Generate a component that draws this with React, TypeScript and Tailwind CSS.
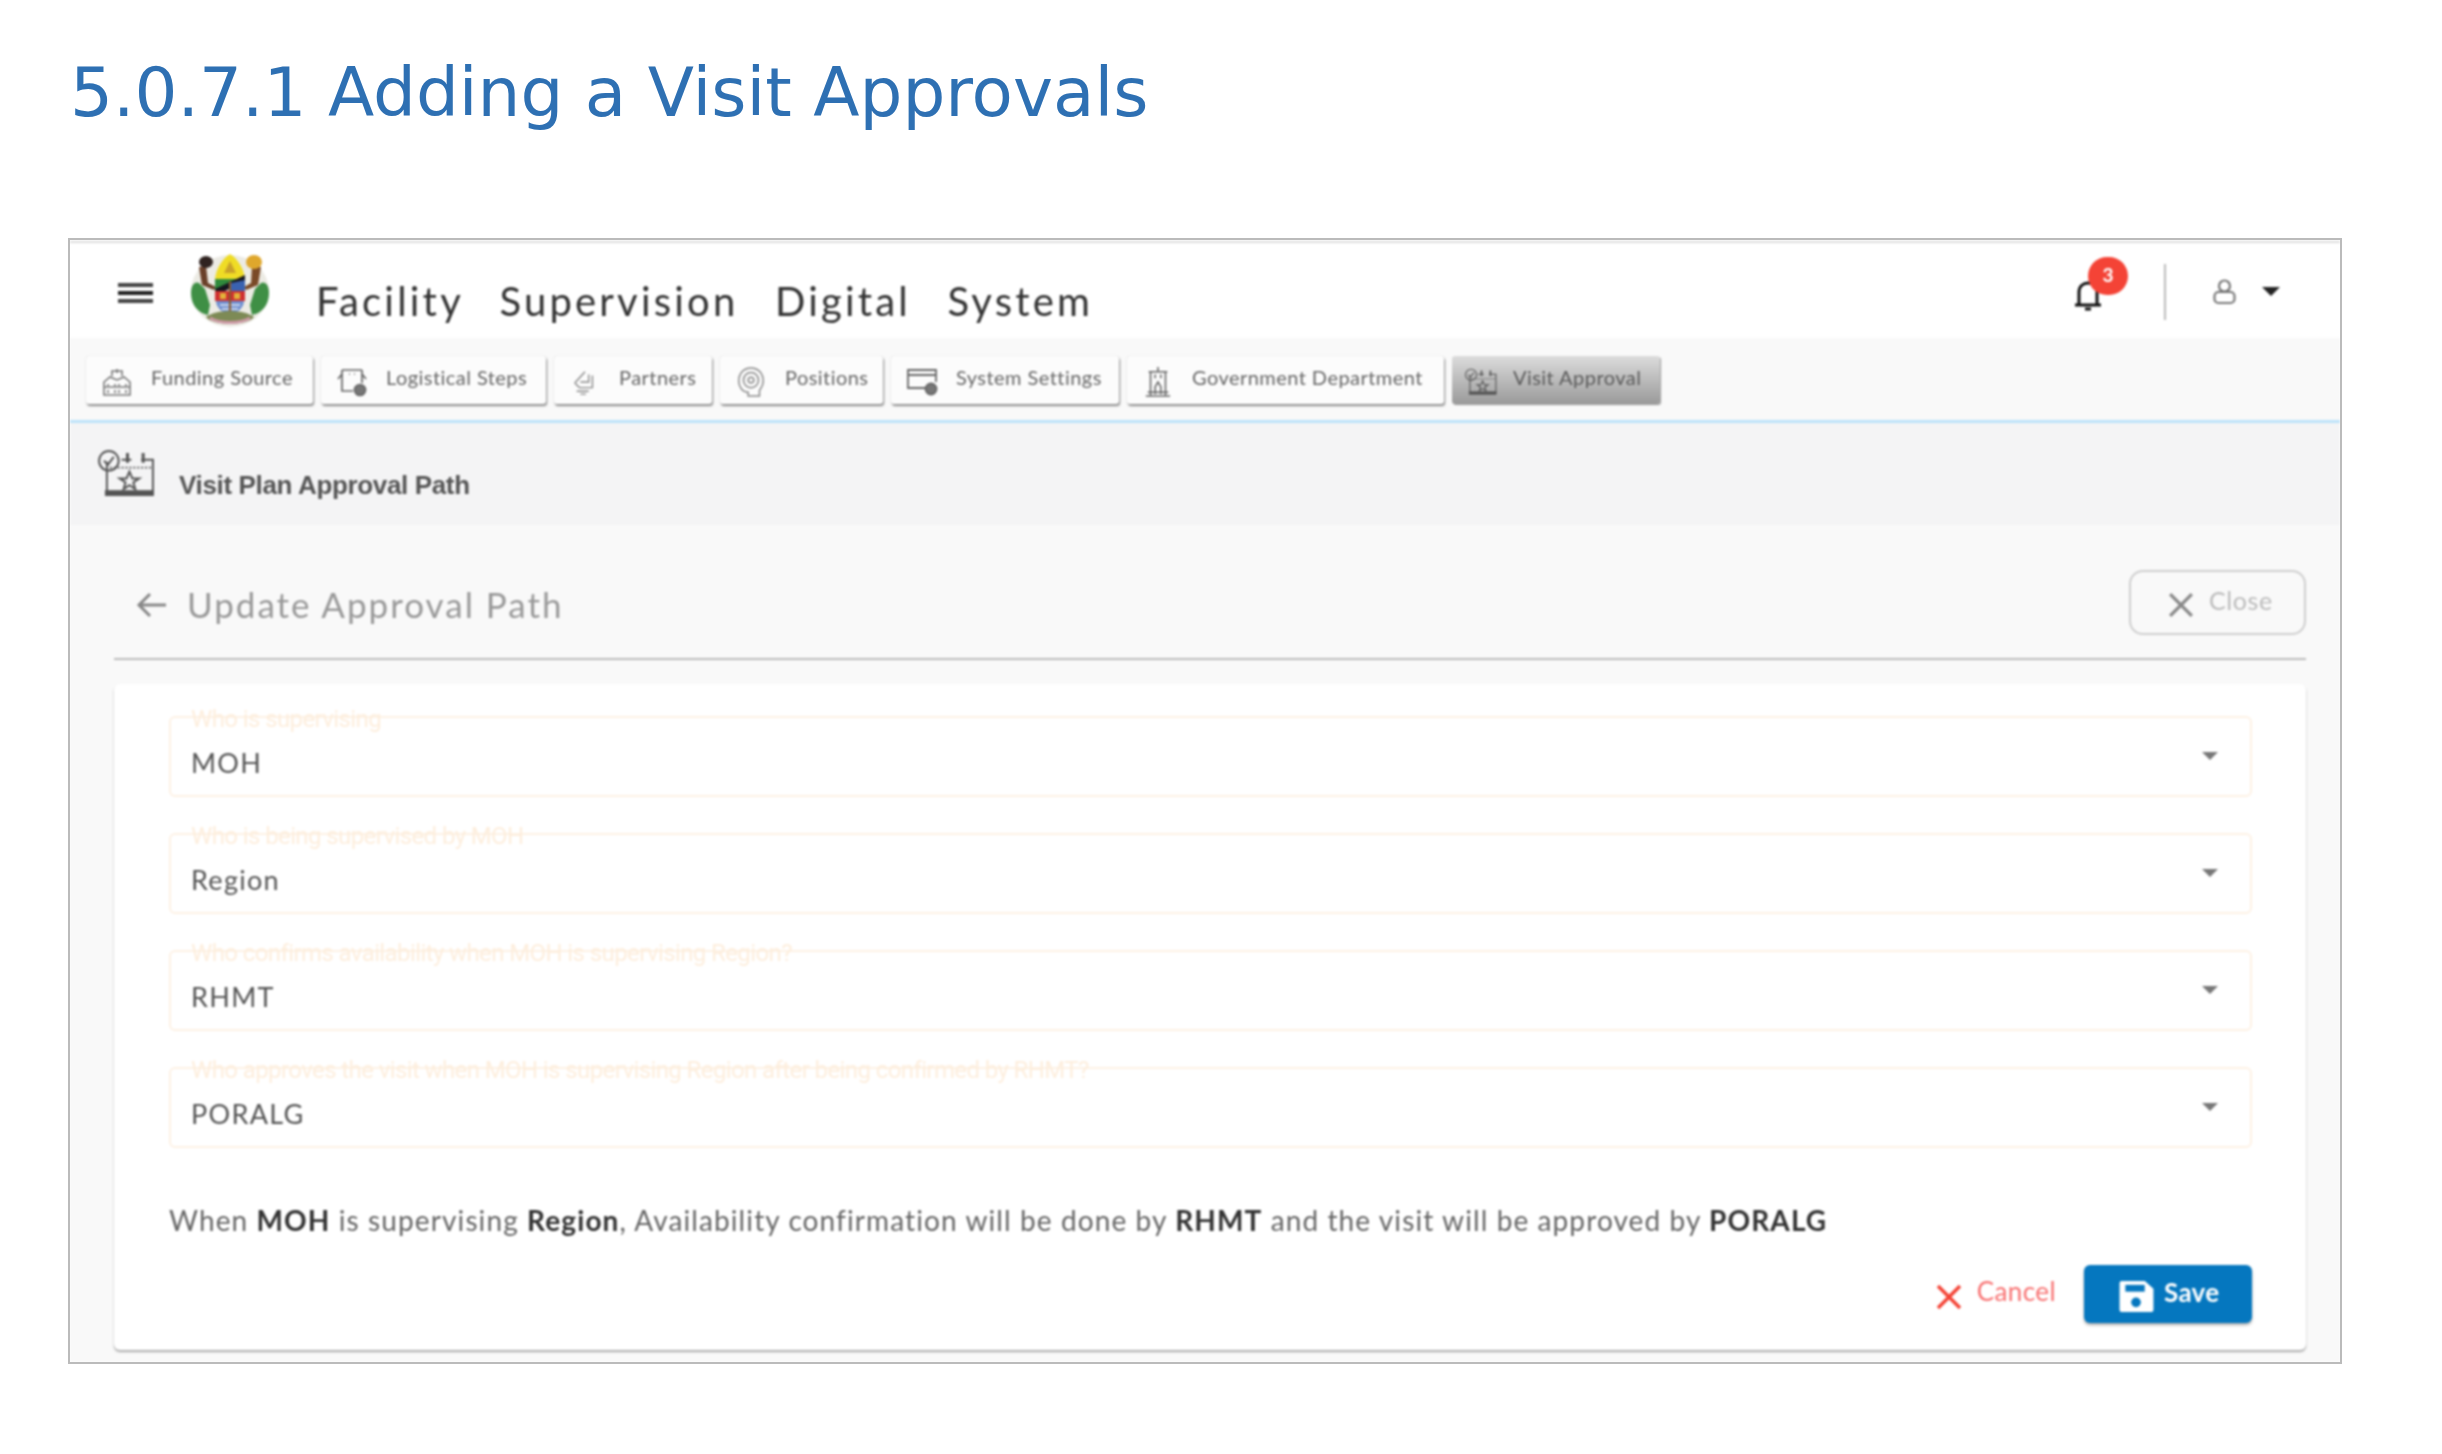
import { ReactNode } from "react";

const ui = "font-['Lato','Open_Sans',sans-serif]";

const FundingIcon = () => (
    <svg viewBox="0 0 30 28" className="w-[30px] h-[28px]" fill="none" stroke="#777" strokeWidth="1.6">
        <path d="M2 14 L8 9 L15 12 L22 9 L28 14 V27 H2 Z" />
        <path d="M10 8 V3 H20 V8 M15 1 V5" />
        <path d="M2 19 H28 M6 16 V18 M13 16 V18 M17 16 V18 M24 16 V18 M6 22 V25 M13 22 V25 M17 22 V25 M24 22 V25" />
    </svg>
);

const StepsIcon = () => (
    <svg viewBox="0 0 30 30" className="w-[30px] h-[30px]" fill="none" stroke="#666" strokeWidth="1.7">
        <path d="M5 3 H25 M5 3 V24 H16 M25 3 V16 M1 12 L5 7 M29 12 L25 7 M12 7 H13 M17 7 H18" />
        <circle cx="23" cy="23" r="5.5" fill="#777" />
    </svg>
);

const PartnersIcon = () => (
    <svg viewBox="0 0 28 28" className="w-[26px] h-[26px]" fill="none" stroke="#888" strokeWidth="1.5">
        <path d="M3 15 L14 3 M9 14 L18 14 V6 M22 7 V20 H8 L3 15 M5 24 H18 M9 27 H15" />
    </svg>
);

const PositionsIcon = () => (
    <svg viewBox="0 0 30 34" className="w-[30px] h-[32px]" fill="none" stroke="#888" strokeWidth="1.6">
        <path d="M15 2 C23 2 28 8 28 16 C28 22 25 24 24 26 V32 H12 V28 C6 28 2 22 2 16 C2 8 7 2 15 2 Z" />
        <circle cx="15" cy="15" r="8" />
        <circle cx="15" cy="15" r="3" />
    </svg>
);

const SettingsIcon = () => (
    <svg viewBox="0 0 32 28" className="w-[32px] h-[28px]" fill="none" stroke="#666" strokeWidth="1.8">
        <path d="M24 20 H2 V2 H30 V14 M2 7 H30" />
        <circle cx="25" cy="21" r="5.5" fill="#777" />
    </svg>
);

const GovernmentIcon = () => (
    <svg viewBox="0 0 30 34" className="w-[28px] h-[34px]" fill="none" stroke="#666" strokeWidth="1.7">
        <path d="M15 1 V6 M5 6 H25 M7 6 V32 M23 6 V32 M2 32 H28 M12 9 V13 M18 9 V13 M12 30 V22 L15 17 L18 22 V30 M4 28 H26" />
    </svg>
);

const CalendarStar = ({ size, stroke }: { size: string; stroke: string }) => (
    <svg viewBox="0 0 58 48" className={size} fill="none" stroke={stroke} strokeWidth="2">
        <path d="M9 12 V44 H56 V10 H44 M34 10 H24" />
        <rect x="8" y="42" width="48" height="4" fill={stroke} />
        <circle cx="11" cy="11" r="10" fill="none" />
        <path d="M6 11 L10 15 L16 7" />
        <path d="M30 3 V13 M46 3 V13" strokeWidth="3" />
        <path d="M12 18 H56" strokeDasharray="2 2" />
        <path d="M32 22 L35 29 L42 29 L36 33 L38 40 L32 36 L26 40 L28 33 L22 29 L29 29 Z" />
    </svg>
);

const Emblem = () => (
    <svg viewBox="0 0 80 74" className="w-[80px] h-[74px]">
        <ellipse cx="40" cy="38" rx="39" ry="36" fill="#ecebe4" />
        {/* figures */}
        <path d="M1 40 C1 32 5 28 9 30 L15 36 L20 52 L18 62 C8 60 1 52 1 40 Z" fill="#3f8f45" />
        <path d="M79 40 C79 32 75 28 71 30 L65 36 L60 52 L62 62 C72 60 79 52 79 40 Z" fill="#3f8f45" />
        <path d="M9 14 L16 13 L18 30 L26 34 L24 37 L12 32 Z" fill="#6a4029" />
        <path d="M71 14 L62 13 L61 30 L54 34 L56 37 L68 32 Z" fill="#7a4a28" />
        <ellipse cx="16" cy="9" rx="7" ry="6" fill="#2f2320" />
        <ellipse cx="64" cy="9" rx="8" ry="7" fill="#dfa72c" />
        {/* shield */}
        <path d="M40 1 C48 6 54 16 55 26 H25 C26 16 32 6 40 1 Z" fill="#efdc25" />
        <path d="M40 8 L46 20 H34 Z" fill="#c9a12a" />
        <path d="M25 26 H55 L25 38 Z" fill="#2f8a3c" />
        <path d="M25 36 L55 22 V28 L27 42 Z" fill="#16161f" />
        <path d="M41 30 L55 27 V38 H41 Z" fill="#3a62b0" />
        <path d="M25 38 H55 V48 H25 Z" fill="#cf3030" />
        <path d="M30 40 H36 V46 H30 Z M44 40 H50 V46 H44 Z" fill="#e2b23a" />
        <path d="M26 48 H54 C54 54 48 60 40 62 C32 60 26 54 26 48 Z" fill="#6f8fd0" />
        <path d="M30 52 H50 M32 56 H48" stroke="#e7edf7" strokeWidth="1.5" />
        <path d="M39 28 H41 V62 H39 Z" fill="#8a5a2a" />
        {/* mound */}
        <path d="M16 64 C26 56 54 56 64 64 C58 73 22 73 16 64 Z" fill="#7d8a55" />
        <path d="M20 65 C30 71 50 71 60 65" stroke="#cf9aa8" strokeWidth="3" fill="none" />
    </svg>
);

const tabs: { label: string; width: string; icon: ReactNode }[] = [
    { label: "Funding Source", width: "w-[227px]", icon: <FundingIcon /> },
    { label: "Logistical Steps", width: "w-[225px]", icon: <StepsIcon /> },
    { label: "Partners", width: "w-[158px]", icon: <PartnersIcon /> },
    { label: "Positions", width: "w-[163px]", icon: <PositionsIcon /> },
    { label: "System Settings", width: "w-[228px]", icon: <SettingsIcon /> },
    { label: "Government Department", width: "w-[317px]", icon: <GovernmentIcon /> },
];

const fields = [
    { label: "Who is supervising", value: "MOH" },
    { label: "Who is being supervised by MOH", value: "Region" },
    { label: "Who confirms availability when MOH is supervising Region?", value: "RHMT" },
    { label: "Who approves the visit when MOH is supervising Region after being confirmed by RHMT?", value: "PORALG" },
];

const Tab = ({ label, width, icon }: { label: string; width: string; icon: ReactNode }) => (
    <div className={`${width} h-[48px] flex items-center bg-[#fcfcfc] rounded-[3px] shadow-[1px_2px_2px_#8a8a8a,0_0_1px_#c4c4c4]`}>
        <div className="w-[65px] flex justify-center pr-[4px] pt-[3px] shrink-0">{icon}</div>
        <span className="text-[20px] text-[#666] tracking-[0.45px] -mt-[7px] whitespace-nowrap">{label}</span>
    </div>
);

const Field = ({ label, value }: { label: string; value: string }) => (
    <div className="relative h-[81px] border-2 border-[#fdf1e4] rounded-[6px] flex items-center pl-[20px] pt-[14px]">
        <span className="absolute left-[20px] -top-[9px] text-[24px] leading-[20px] text-[#fdeedd] font-['Roboto',sans-serif] tracking-[-0.6px] whitespace-nowrap">
            {label}
        </span>
        <span className="text-[27px] text-[#555] tracking-[1.3px]">{value}</span>
        <svg viewBox="0 0 16 8" className="absolute right-[32px] top-[34px] w-[16px] h-[8px]">
            <path d="M0 0 H16 L8 8 Z" fill="#777" />
        </svg>
    </div>
);

export default function App() {
    return (
        <div className="w-[2442px] h-[1454px] bg-white">
            <div className="h-[238px] pl-[70px] pt-[47px]">
                <h1 className="font-['DejaVu_Sans',sans-serif] text-[67.6px] leading-[92px] text-[#2e70b3]">
                    5.0.7.1 Adding a Visit Approvals
                </h1>
            </div>

            {/* Screenshot frame */}
            <div className={`${ui} relative ml-[68px] w-[2274px] h-[1126px] border-2 border-[#bbbbbb] overflow-hidden`}>
                <div className="absolute -left-[2px] top-[840px] w-[2px] h-[80px] bg-[#7f9db8]" />
                <div className="flex flex-col h-full blur-[0.9px]">
                    <div className="h-[3px] border-b-2 border-[#dddddd]" />

                    {/* Top bar */}
                    <header className="h-[95px] bg-white flex items-center pl-[48px] pr-[60px]">
                        <div className="flex flex-col gap-[4px] w-[35px] mt-[4px]">
                            <span className="h-[4px] bg-[#444]" />
                            <span className="h-[4px] bg-[#222]" />
                            <span className="h-[4px] bg-[#444]" />
                        </div>
                        <div className="ml-[37px] -mt-[2px]">
                            <Emblem />
                        </div>
                        <div className="ml-[46px] mt-[20px] text-[40px] text-[#333] tracking-[3.2px] [word-spacing:23px] whitespace-nowrap">
                            Facility Supervision Digital System
                        </div>
                        <div className="ml-auto flex items-center mt-[2px]">
                            <div className="relative w-[32px] h-[34px] mt-[6px]">
                                <svg viewBox="0 0 30 34" className="w-[30px] h-[34px]" fill="none" stroke="#111" strokeWidth="3">
                                    <path d="M2 27 H28 M6 27 V14 C6 2 24 2 24 14 V27" />
                                    <path d="M12 31 H18" />
                                </svg>
                                <span className="absolute left-[15px] -top-[21px] w-[40px] h-[38px] rounded-full bg-[#f44336] text-white text-[19px] font-bold flex items-center justify-center">
                                    3
                                </span>
                            </div>
                            <div className="ml-[59px] w-[2px] h-[56px] bg-[#bbbbbb]" />
                            <svg viewBox="0 0 24 26" className="ml-[46px] w-[25px] h-[26px]" fill="none" stroke="#777" strokeWidth="2.2">
                                <circle cx="12" cy="7" r="5.5" />
                                <rect x="2" y="13" width="20" height="11" rx="4" />
                            </svg>
                            <svg viewBox="0 0 18 9" className="ml-[25px] w-[18px] h-[9px]">
                                <path d="M0 0 H18 L9 9 Z" fill="#222" />
                            </svg>
                        </div>
                    </header>

                    {/* Tabs */}
                    <nav className="h-[82px] bg-[#f9f9f9] flex gap-2 pt-[18px] pl-[16px]">
                        {tabs.map((tab) => (
                            <Tab key={tab.label} {...tab} />
                        ))}
                        <div className="w-[208px] h-[48px] flex items-center rounded-[3px] bg-[linear-gradient(#dcdcdc,#9a9a9a)] shadow-[1px_1px_1px_#999]">
                            <div className="w-[61px] flex justify-center pr-[4px] pt-[3px] shrink-0">
                                <CalendarStar size="w-[32px] h-[30px]" stroke="#555" />
                            </div>
                            <span className="text-[20px] text-[#5a5a5a] tracking-[0.45px] -mt-[7px] whitespace-nowrap">Visit Approval</span>
                        </div>
                    </nav>
                    <div className="h-[3px] bg-[#bde3fa]" />

                    {/* Section band */}
                    <div className="h-[102px] bg-[#f4f4f5] flex pl-[28px] pt-[27px]">
                        <CalendarStar size="w-[57px] h-[47px]" stroke="#555" />
                        <span className="ml-[24px] mt-[17px] text-[26px] leading-[36px] font-semibold text-[#555] font-['Liberation_Sans',sans-serif] tracking-[-0.35px]">
                            Visit Plan Approval Path
                        </span>
                    </div>

                    {/* Content */}
                    <div className="flex-1 bg-[#f9f9f9] pl-[44px] pr-[34px]">
                        <div className="h-[135px] border-b-2 border-[#bbbbbb] flex justify-between pt-[45px]">
                            <div className="flex items-center h-[72px] pl-[22px] -mt-[2px]">
                                <svg viewBox="0 0 30 26" className="w-[30px] h-[26px] mt-[2px]" fill="none" stroke="#888" strokeWidth="3">
                                    <path d="M30 13 H3 M14 2 L3 13 L14 24" />
                                </svg>
                                <span className="ml-[21px] text-[35px] text-[#999] tracking-[2px]">Update Approval Path</span>
                            </div>
                            <div className="w-[177px] h-[65px] border-2 border-[#cfcfcf] rounded-[14px] flex items-center pl-[37px]">
                                <svg viewBox="0 0 24 24" className="w-[26px] h-[26px] mt-[4px]" fill="none" stroke="#888" strokeWidth="3">
                                    <path d="M2 2 L22 22 M22 2 L2 22" />
                                </svg>
                                <span className="ml-[15px] -mt-[4px] text-[25px] tracking-[0.6px] text-[#bbbbbb]">Close</span>
                            </div>
                        </div>

                        {/* Form card */}
                        <div className="mt-[24px] h-[666px] bg-white rounded-[6px] shadow-[0_2px_2px_#aaaaaa] pl-[55px] pr-[54px] pt-[32px]">
                            <div className="flex flex-col gap-[36px]">
                                {fields.map((field) => (
                                    <Field key={field.label} {...field} />
                                ))}
                            </div>
                            <p className="mt-[52px] text-[28px] leading-[40px] text-[#666] tracking-[1.1px] whitespace-nowrap">
                                When <b className="text-[#333]">MOH</b> is supervising <b className="text-[#333]">Region</b>, Availability
                                confirmation will be done by <b className="text-[#333]">RHMT</b> and the visit will be approved by{" "}
                                <b className="text-[#333]">PORALG</b>
                            </p>
                            <div className="mt-[25px] flex justify-end items-center">
                                <svg viewBox="0 0 26 26" className="w-[26px] h-[26px] mt-[6px]" fill="none" stroke="#f44336" strokeWidth="3.5">
                                    <path d="M2 2 L24 24 M24 2 L2 24" />
                                </svg>
                                <span className="ml-[15px] -mt-[5px] text-[26px] tracking-[0.4px] text-[#f87171]">Cancel</span>
                                <button className="ml-[28px] w-[168px] h-[58px] bg-[#0577bf] rounded-[6px] shadow-[0_2px_3px_#aaaaaa] flex items-center pl-[35px] text-white">
                                    <svg viewBox="0 0 35 32" className="w-[35px] h-[31px] mt-[4px]">
                                        <path d="M2 0 H26 L35 8 V30 Q35 32 33 32 H2 Q0 32 0 30 V2 Q0 0 2 0 Z" fill="#fff" />
                                        <rect x="6" y="4" width="20" height="7" fill="#0577bf" />
                                        <circle cx="17" cy="22" r="5" fill="#0577bf" />
                                    </svg>
                                    <span className="ml-[10px] -mt-[4px] text-[26px] font-bold tracking-[0.3px]">Save</span>
                                </button>
                            </div>
                        </div>
                    </div>
                </div>
            </div>
        </div>
    );
}
